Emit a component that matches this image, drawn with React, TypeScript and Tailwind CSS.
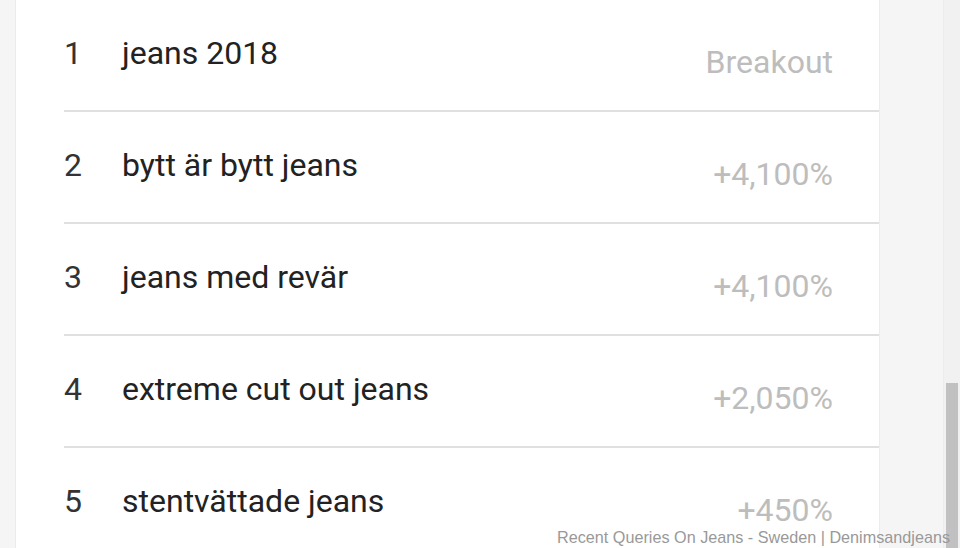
const rows = [
  { rank: 1, query: "jeans 2018", value: "Breakout" },
  { rank: 2, query: "bytt är bytt jeans", value: "+4,100%" },
  { rank: 3, query: "jeans med revär", value: "+4,100%" },
  { rank: 4, query: "extreme cut out jeans", value: "+2,050%" },
  { rank: 5, query: "stentvättade jeans", value: "+450%" },
];

export default function App() {
  return (
    <div className="relative flex h-[548px] w-[960px] overflow-hidden bg-[#f5f5f5] font-['Roboto',sans-serif]">
      <div className="w-[15px] shrink-0 bg-[#f5f5f5]" />

      <div className="w-[864px] shrink-0 border-l border-[#ebebeb] bg-white pl-[48px]">
        {rows.map((row) => (
          <div
            key={row.rank}
            className="flex h-[112px] shrink-0 border-b-2 border-[#e0e0e0] last:border-b-0"
          >
            <div className="w-[58px] shrink-0 pt-[35px] text-[32px] leading-[36px] text-[#333]">
              {row.rank}
            </div>
            <div className="flex-1 pt-[35px] text-[32px] leading-[36px] text-[#222]">
              {row.query}
            </div>
            <div className="pr-[46px] pt-[44px] text-[32px] leading-[36px] text-[#bdbdbd]">
              {row.value}
            </div>
          </div>
        ))}
      </div>

      <div className="flex-1 border-l border-[#ececec] bg-[#f5f5f5]" />

      <div className="relative w-[17px] shrink-0 border-l border-[#ececec] bg-[#f1f1f1]">
        <div className="absolute left-[2px] right-[2px] top-[383px] bottom-0 bg-[#c1c1c1]" />
      </div>

      <div className="absolute bottom-[1px] right-[10px] font-['Liberation_Sans',Arial,sans-serif] text-[16.2px] leading-[20px] text-[#999]">
        Recent Queries On Jeans - Sweden | Denimsandjeans
      </div>
    </div>
  );
}
